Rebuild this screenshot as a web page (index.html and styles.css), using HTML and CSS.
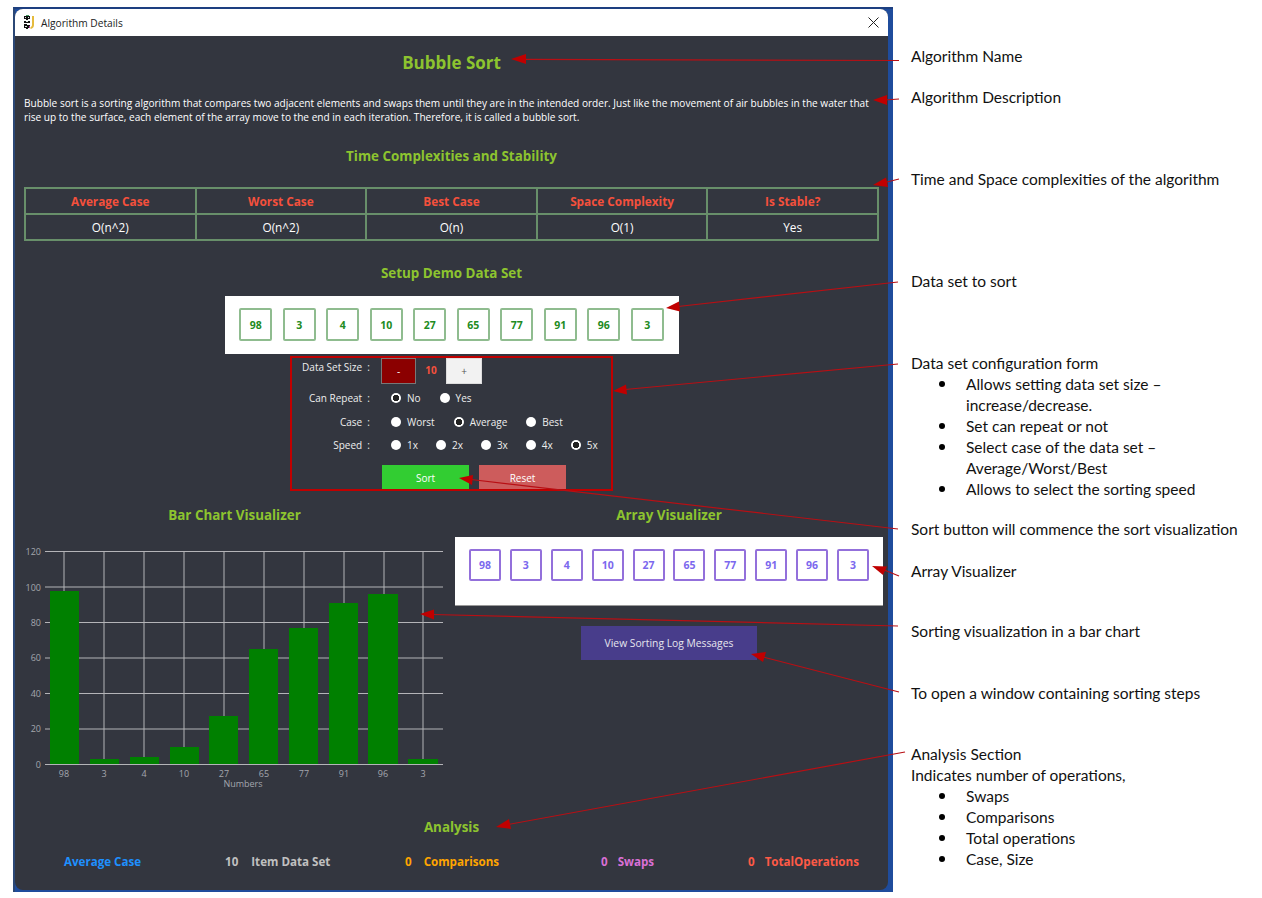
FILE: index.html
```html
<!DOCTYPE html>
<html lang="en">
<head>
    <meta charset="UTF-8">
    <meta name="viewport" content="width=device-width, initial-scale=1.0">
    <title>Algorithm Details</title>
    <link rel="stylesheet" href="styles.css">
</head>
<body>
    <div class="page">
        <div class="window-frame">
            <div class="window">
                <div class="title-bar">
                    <svg class="app-icon" width="14" height="15" viewBox="0 0 14 15">
                        <path d="M1 1h6v3H5v1H3V4H1zM1 6h6v2H1zM1 9h3v1h3v3H5v1H3v-1H1z" fill="#111"/>
                        <path d="M2 2h1v1H2zM5 2h1v1H5zM3 6h2v1H3zM2 11h2v1H2z" fill="#dfe9e4"/>
                        <path d="M3 0h3v1H3z" fill="#3f9a5c"/>
                        <path d="M9 1h2v9c0 2-1 3-3 4l-1-1c1-1 2-2 2-3z" fill="#e5bb3d"/>
                        <path d="M6 11h1v2H6z" fill="#b0409c"/>
                    </svg>
                    <span class="title-text">Algorithm Details</span>
                    <svg class="close-icon" width="11" height="11" viewBox="0 0 11 11">
                        <path d="M.5.5l10 10M10.500.5l-10 10" stroke="#222" stroke-width="1" fill="none"/>
                    </svg>
                </div>

                <div class="content">
                    <h1>Bubble Sort</h1>
                    <p class="description">Bubble sort is a sorting algorithm that compares two adjacent elements and swaps them until they are in the intended order. Just like the movement of air bubbles in the water that rise up to the surface, each element of the array move to the end in each iteration. Therefore, it is called a bubble sort.</p>

                    <h2 class="heading-time">Time Complexities and Stability</h2>
                    <table class="complexity">
                        <tr>
                            <th>Average Case</th>
                            <th>Worst Case</th>
                            <th>Best Case</th>
                            <th>Space Complexity</th>
                            <th>Is Stable?</th>
                        </tr>
                        <tr>
                            <td>O(n^2)</td>
                            <td>O(n^2)</td>
                            <td>O(n)</td>
                            <td>O(1)</td>
                            <td>Yes</td>
                        </tr>
                    </table>

                    <h2 class="heading-setup">Setup Demo Data Set</h2>
                    <div class="data-panel">
                        <div class="cell">98</div>
                        <div class="cell">3</div>
                        <div class="cell">4</div>
                        <div class="cell">10</div>
                        <div class="cell">27</div>
                        <div class="cell">65</div>
                        <div class="cell">77</div>
                        <div class="cell">91</div>
                        <div class="cell">96</div>
                        <div class="cell">3</div>
                    </div>

                    <form class="config">
                        <div class="size-row">
                            <span class="field-label">Data Set Size &nbsp;:</span>
                            <button type="button" class="btn-minus">-</button>
                            <span class="size-value">10</span>
                            <button type="button" class="btn-plus">+</button>
                        </div>
                        <div class="radio-row row-repeat">
                            <span class="field-label">Can Repeat &nbsp;:</span>
                            <label><input type="radio" name="repeat" checked>No</label>
                            <label><input type="radio" name="repeat">Yes</label>
                        </div>
                        <div class="radio-row row-case">
                            <span class="field-label">Case &nbsp;:</span>
                            <label><input type="radio" name="case">Worst</label>
                            <label><input type="radio" name="case" checked>Average</label>
                            <label><input type="radio" name="case">Best</label>
                        </div>
                        <div class="radio-row row-speed">
                            <span class="field-label">Speed &nbsp;:</span>
                            <label><input type="radio" name="speed">1x</label>
                            <label><input type="radio" name="speed">2x</label>
                            <label><input type="radio" name="speed">3x</label>
                            <label><input type="radio" name="speed">4x</label>
                            <label><input type="radio" name="speed" checked>5x</label>
                        </div>
                        <div class="action-row">
                            <button type="button" class="btn-sort">Sort</button>
                            <button type="button" class="btn-reset">Reset</button>
                        </div>
                    </form>

                    <div class="visualizers">
                        <div class="chart-col">
                            <h2>Bar Chart Visualizer</h2>
                            <svg class="chart" width="421" height="260" viewBox="24 535 421 260">
                                <g class="grid">
                                    <path d="M45 551.500H443M45 587H443M45 622.500H443M45 658H443M45 693.500H443M45 729H443M45 764.500H443"/>
                                    <path d="M64 551V764M104 551V764M144 551V764M184 551V764M224 551V764M264 551V764M304 551V764M344 551V764M384 551V764M423 551V764"/>
                                </g>
                                <g class="bars">
                                    <rect x="50" y="591" width="29" height="173"/>
                                    <rect x="90" y="759" width="29" height="5"/>
                                    <rect x="130" y="757" width="29" height="7"/>
                                    <rect x="170" y="747" width="29" height="17"/>
                                    <rect x="209" y="716" width="29" height="48"/>
                                    <rect x="249" y="649" width="29" height="115"/>
                                    <rect x="289" y="628" width="29" height="136"/>
                                    <rect x="329" y="603" width="29" height="161"/>
                                    <rect x="368" y="594" width="30" height="170"/>
                                    <rect x="408" y="759" width="30" height="5"/>
                                </g>
                                <g class="y-labels">
                                    <text x="41" y="555">120</text>
                                    <text x="41" y="591">100</text>
                                    <text x="41" y="626">80</text>
                                    <text x="41" y="661">60</text>
                                    <text x="41" y="697">40</text>
                                    <text x="41" y="732">20</text>
                                    <text x="41" y="768">0</text>
                                </g>
                                <g class="x-labels">
                                    <text x="64" y="777">98</text>
                                    <text x="104" y="777">3</text>
                                    <text x="144" y="777">4</text>
                                    <text x="184" y="777">10</text>
                                    <text x="224" y="777">27</text>
                                    <text x="264" y="777">65</text>
                                    <text x="304" y="777">77</text>
                                    <text x="344" y="777">91</text>
                                    <text x="383" y="777">96</text>
                                    <text x="423" y="777">3</text>
                                    <text x="243" y="787">Numbers</text>
                                </g>
                            </svg>
                        </div>
                        <div class="array-col">
                            <h2>Array Visualizer</h2>
                            <div class="array-panel">
                                <div class="array-cell">98</div>
                                <div class="array-cell">3</div>
                                <div class="array-cell">4</div>
                                <div class="array-cell">10</div>
                                <div class="array-cell">27</div>
                                <div class="array-cell">65</div>
                                <div class="array-cell">77</div>
                                <div class="array-cell">91</div>
                                <div class="array-cell">96</div>
                                <div class="array-cell">3</div>
                            </div>
                            <button type="button" class="btn-log">View Sorting Log Messages</button>
                        </div>
                    </div>

                    <h2 class="heading-analysis">Analysis</h2>
                    <div class="stats">
                        <div class="stat stat-case"><span>Average Case</span></div>
                        <div class="stat stat-items"><span>10</span><span>Item Data Set</span></div>
                        <div class="stat stat-comp"><span>0</span><span>Comparisons</span></div>
                        <div class="stat stat-swaps"><span>0</span><span>Swaps</span></div>
                        <div class="stat stat-total"><span>0</span><span>TotalOperations</span></div>
                    </div>
                </div>
            </div>
        </div>

        <div class="notes">
            <div class="note note-name">Algorithm Name</div>
            <div class="note note-desc">Algorithm Description</div>
            <div class="note note-time">Time and Space complexities of the algorithm</div>
            <div class="note note-data">Data set to sort</div>
            <div class="note note-form">Data set configuration form
                <ul>
                    <li>Allows setting data set size &ndash; increase/decrease.</li>
                    <li>Set can repeat or not</li>
                    <li>Select case of the data set &ndash; Average/Worst/Best</li>
                    <li>Allows to select the sorting speed</li>
                </ul>
            </div>
            <div class="note note-sort">Sort button will commence the sort visualization</div>
            <div class="note note-array">Array Visualizer</div>
            <div class="note note-bars">Sorting visualization in a bar chart</div>
            <div class="note note-log">To open a window containing sorting steps</div>
            <div class="note note-analysis">Analysis Section<br>Indicates number of operations,
                <ul>
                    <li>Swaps</li>
                    <li>Comparisons</li>
                    <li>Total operations</li>
                    <li>Case, Size</li>
                </ul>
            </div>
        </div>

        <!-- callout arrows sit on top of the whole page -->
        <svg class="arrows" width="1262" height="898" viewBox="0 0 1262 898">
            <g class="arrow-lines">
                <path d="M524 59.300L899 60.500"/>
                <path d="M885 100L899 99"/>
                <path d="M885 182.500L899 179"/>
                <path d="M678 306.500L898 282"/>
                <path d="M625 389.500L898 364"/>
                <path d="M471 479.500L898 529"/>
                <path d="M883 569.500L899 576"/>
                <path d="M432 614.500L898 626"/>
                <path d="M763 657L899 692"/>
                <path d="M508 824.500L905 752"/>
            </g>
            <g class="arrow-heads">
                <path d="M511 59L526 54V64Z"/>
                <path d="M873 100L887 95V105Z"/>
                <path d="M873 185L886 177.500L888 187Z"/>
                <path d="M666 308L679 301.500L680 311.500Z"/>
                <path d="M613 391L626 384.500L627 394.500Z"/>
                <path d="M459 478L473 475L472 485Z"/>
                <path d="M872 566L887 566.500L883 575Z"/>
                <path d="M420 614L434 609.500L434 619.500Z"/>
                <path d="M751 654L766 652L763 662Z"/>
                <path d="M496 827L509 819L511 829Z"/>
            </g>
        </svg>
    </div>
</body>
</html>
```

FILE: styles.css
```css
* {
    box-sizing: border-box;
}
body {
    margin: 0;
    background: #fff;
    font-family: "Open Sans", "Noto Sans", sans-serif;
}
h1, h2, p, ul {
    margin: 0;
}
.page {
    position: relative;
    display: flex;
    gap: 18px;
    width: 1262px;
    height: 898px;
    overflow: hidden;
    padding: 7px 0 0 13px;
}

/* window */
.window-frame {
    width: 880px;
    height: 885px;
    padding: 0 5px 2px 0;
    background: #1f4c9c;
    border-top: 2px solid #1d3f80;
    border-left: 2px solid #2b4775;
    flex: none;
}
.window {
    height: 100%;
    border-radius: 8px;
    overflow: hidden;
    background: #33363f;
}
.title-bar {
    display: flex;
    align-items: center;
    height: 27px;
    padding: 0 9px 0 8px;
    background: #fff;
}
.app-icon {
    margin-right: 4px;
}
.title-text {
    flex: 1;
    font-size: 10.2px;
    color: #222;
}
.content {
    padding: 15px 9px 0;
    text-align: center;
}
h1 {
    font-size: 17px;
    line-height: 24px;
    color: #8dc42f;
}
h2 {
    font-size: 13.4px;
    line-height: 20px;
    color: #8dc42f;
}
.description {
    margin-top: 21px;
    font-size: 10.1px;
    line-height: 14px;
    color: #fff;
    text-align: left;
}
.heading-time {
    margin-top: 22px;
}
.complexity {
    width: 855px;
    height: 54px;
    margin-top: 21px;
    border-collapse: collapse;
    table-layout: fixed;
}
.complexity th, .complexity td {
    padding: 0;
    border: 2px solid #688f6a;
    font-size: 11.8px;
    color: #fff;
}
.complexity th {
    color: #f5503c;
}
.heading-setup {
    margin-top: 22px;
}

/* data set */
.data-panel {
    display: flex;
    justify-content: center;
    gap: 10.5px;
    width: 454px;
    height: 58px;
    margin: 13px auto 0;
    padding-top: 12px;
    background: #fff;
}
.cell {
    display: flex;
    align-items: center;
    justify-content: center;
    width: 33px;
    height: 33px;
    border: 2px solid #8fbc8f;
    border-radius: 2px;
    font-size: 10.5px;
    font-weight: bold;
    color: #228b22;
}

/* form */
.config {
    width: 323px;
    margin: 2px auto 0;
    border: 2px solid #c00000;
    color: #eee;
    font-size: 10px;
    text-align: left;
}
.field-label {
    flex: none;
    width: 78px;
    line-height: 14px;
    text-align: right;
}
.size-row {
    display: flex;
    height: 26px;
}
.size-row .field-label {
    padding-top: 2px;
}
.btn-minus, .btn-plus {
    padding: 0;
    font-family: inherit;
    font-size: 10px;
}
.btn-minus {
    width: 35px;
    margin-left: 11px;
    background: #8b0000;
    border: 1px solid #777;
    color: #fff;
}
.size-value {
    width: 30px;
    padding-top: 5px;
    font-size: 10px;
    font-weight: bold;
    text-align: center;
    color: #f5503c;
}
.btn-plus {
    width: 36px;
    background: #f2f2f2;
    border: 1px solid #ddd;
    color: #555;
}
.radio-row {
    display: flex;
    align-items: center;
    gap: 19px;
    height: 14px;
}
.radio-row .field-label {
    margin-right: 2px;
}
.row-repeat {
    margin-top: 7px;
}
.row-case {
    margin-top: 10px;
}
.row-speed {
    gap: 18px;
    margin-top: 9px;
}
.row-speed .field-label {
    margin-right: 3px;
}
.radio-row label {
    display: flex;
    align-items: center;
    gap: 6px;
}
.radio-row input {
    appearance: none;
    width: 10px;
    height: 10px;
    margin: 0;
    border-radius: 50%;
    background: #fff;
}
.radio-row input:checked {
    background: radial-gradient(circle, #222 2.9px, #fff 3.5px);
}
.action-row {
    display: flex;
    gap: 10px;
    margin: 13px 0 0 90px;
}
.action-row button {
    width: 87px;
    height: 24px;
    padding: 1px 0 0;
    border: 0;
    font-family: inherit;
    font-size: 10px;
    color: #fff;
}
.btn-sort {
    background: #32cd32;
}
.btn-reset {
    background: #cd5c5c;
}

/* visualizers */
.visualizers {
    display: flex;
    gap: 10px;
    margin: 14px -4px 0 0;
}
.chart-col {
    width: 421px;
    flex: none;
}
.array-col {
    width: 428px;
    flex: none;
}
.chart {
    display: block;
    margin-top: 10px;
}
.grid path {
    fill: none;
    stroke: #b4b4b8;
    stroke-width: 1;
}
.bars rect {
    fill: #008000;
}
.y-labels text, .x-labels text {
    font-size: 9px;
    fill: #a3a6ae;
}
.y-labels text {
    text-anchor: end;
}
.x-labels text {
    text-anchor: middle;
}
.array-panel {
    display: flex;
    justify-content: center;
    gap: 8.9px;
    height: 69px;
    margin-top: 12px;
    padding-top: 12px;
    background: #fff;
    border-bottom: 1px solid #999;
}
.array-cell {
    display: flex;
    align-items: center;
    justify-content: center;
    width: 32px;
    height: 32px;
    border: 2px solid #9370db;
    border-radius: 2px;
    font-size: 10.5px;
    font-weight: bold;
    color: #7b68ee;
}
.btn-log {
    width: 176px;
    height: 34px;
    margin-top: 20px;
    padding: 0;
    border: 0;
    background: #483d8b;
    font-family: inherit;
    font-size: 10.3px;
    color: #e6e6ee;
}

/* analysis */
.heading-analysis {
    margin-top: 22px;
}
.stats {
    display: grid;
    grid-template-columns: 161px 180px 196px 147px 1fr;
    margin-top: 15px;
    padding-left: 40px;
    font-size: 11.6px;
    font-weight: bold;
    line-height: 20px;
    text-align: left;
}
.stat {
    display: flex;
    gap: 12px;
}
.stat-items {
    gap: 13px;
    color: #c0c0c0;
}
.stat-case {
    color: #1e90ff;
}
.stat-comp {
    color: #ffa500;
}
.stat-swaps {
    gap: 10px;
    color: #da70d6;
}
.stat-total {
    gap: 10px;
    color: #ff5a46;
}

/* annotation column */
.notes {
    flex: 1;
    padding-top: 39px;
    font-family: Lato, sans-serif;
    font-size: 15.5px;
    line-height: 21px;
    color: #111;
}
.note-desc { margin-top: 20px; }
.note-time { margin-top: 61px; }
.note-data { margin-top: 81px; }
.note-form { margin-top: 61px; }
.note-sort { margin-top: 19px; }
.note-array { margin-top: 21px; }
.note-bars { margin-top: 39px; }
.note-log { margin-top: 41px; }
.note-analysis { margin-top: 40px; }
.notes ul {
    padding-left: 55px;
    list-style: none;
}
.notes li {
    width: 240px;
}
.notes li::before {
    content: "";
    float: left;
    width: 6px;
    height: 6px;
    margin: 7px 0 0 -27px;
    border-radius: 50%;
    background: #000;
}

/* callouts */
.arrows {
    position: absolute;
    top: 0;
    left: 0;
    pointer-events: none;
}
.arrow-lines path {
    fill: none;
    stroke: #b80f14;
    stroke-width: 1.2;
}
.arrow-heads path {
    fill: #c00000;
}
```
